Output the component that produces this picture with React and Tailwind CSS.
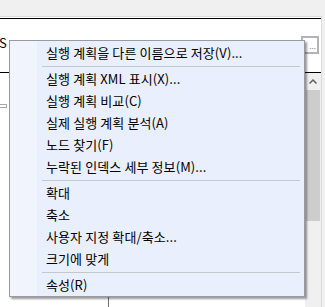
import React from 'react';

// 컨텍스트 메뉴 항목 (null = 구분선)
const menuItems = [
  '실행 계획을 다른 이름으로 저장(V)...',
  null,
  '실행 계획 XML 표시(X)...',
  '실행 계획 비교(C)',
  '실제 실행 계획 분석(A)',
  '노드 찾기(F)',
  '누락된 인덱스 세부 정보(M)...',
  null,
  '확대',
  '축소',
  '사용자 지정 확대/축소...',
  '크기에 맞게',
  null,
  '속성(R)',
];

const ContextMenu = () => {
  return (
    <div className="absolute left-[9px] top-[40px] w-[296px] border border-[#979aa1] bg-[#e9effd] pt-[1px] shadow-[2px_2px_2px_rgba(0,0,0,0.4)]">
      {/* 왼쪽 아이콘 영역 */}
      <div className="absolute left-0 top-0 bottom-0 w-[27px] bg-[#f1f4fd]" />
      <div className="relative">
        {menuItems.map((label, i) =>
          label === null ? (
            <div key={i} className="h-[4px] flex items-center pl-[32px] pr-[4px]">
              <div className="h-px w-full bg-[#c4c7ce]" />
            </div>
          ) : (
            <div
              key={i}
              className="h-[22px] flex items-center pl-[36px] text-[13px] leading-[22px] tracking-[0.1px] text-black whitespace-nowrap"
            >
              {label}
            </div>
          )
        )}
      </div>
    </div>
  );
};

const App = () => {
  return (
    <div className="relative w-[325px] h-[307px] overflow-hidden bg-[#f0f0f0] font-['Noto_Sans_CJK_KR','Noto_Sans',sans-serif]">
      <div className="mt-[16px] w-[322px] h-[291px] border-t border-r border-[#dcdcdc] bg-white pt-[1px] flex flex-col">
        <div className="h-px bg-black" />
        {/* 상단 속성 행 */}
        <div className="relative h-[53px] flex items-start">
          <span className="mt-[17px] -ml-[1px] text-[13px] leading-[14px] text-black">S</span>
          <div className="ml-auto mt-[17px] mr-[2px] w-[18px] h-[18px] border-2 border-[#b4b4b4] bg-white flex items-end justify-end pr-[1px] pb-[3px]">
            <span className="text-[8px] leading-[6px] text-[#6b7fa8]">...</span>
          </div>
        </div>
        <div className="h-px bg-black" />
        {/* 다이어그램 영역 + 스크롤바 */}
        <div className="relative flex-1 flex">
          <div className="relative flex-1">
            <div className="absolute left-[-2px] top-[31px] w-[9px] h-[4px] border border-[#a8a8a8] bg-white" />
            <div className="absolute left-[108px] top-[220px] w-px h-[20px] bg-[#707070]" />
          </div>
          <div className="w-[16px] bg-[#f0f0f0] flex flex-col items-center">
            <div className="h-[17px] w-full flex items-center justify-center">
              <svg width="8" height="5" viewBox="0 0 8 5">
                <polyline points="0.5,4.5 4,1 7.5,4.5" fill="none" stroke="#606060" strokeWidth="1.5" />
              </svg>
            </div>
            <div className="w-[14px] h-[131px] bg-[#cdcdcd]" />
          </div>
        </div>
      </div>
      <ContextMenu />
    </div>
  );
};

export default App;
